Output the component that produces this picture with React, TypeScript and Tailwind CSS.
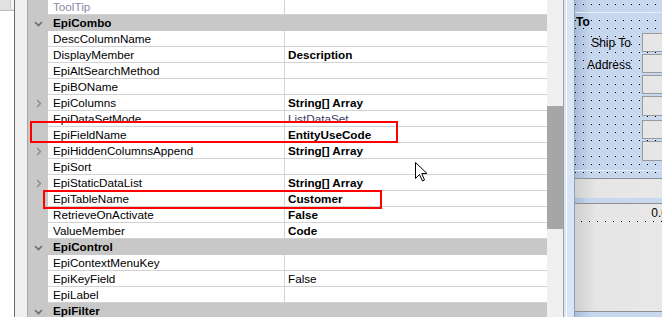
import React from "react"

type Row =
  | { kind: "cat"; name: string }
  | { kind: "prop"; name: string; value?: string; bold?: boolean; expand?: boolean; dim?: boolean; valueColor?: string }

const rows: Row[] = [
  { kind: "prop", name: "ToolTip", dim: true },
  { kind: "cat", name: "EpiCombo" },
  { kind: "prop", name: "DescColumnName" },
  { kind: "prop", name: "DisplayMember", value: "Description", bold: true },
  { kind: "prop", name: "EpiAltSearchMethod" },
  { kind: "prop", name: "EpiBOName" },
  { kind: "prop", name: "EpiColumns", value: "String[] Array", bold: true, expand: true },
  { kind: "prop", name: "EpiDataSetMode", value: "ListDataSet", valueColor: "text-[#3a3a5e]" },
  { kind: "prop", name: "EpiFieldName", value: "EntityUseCode", bold: true },
  { kind: "prop", name: "EpiHiddenColumnsAppend", value: "String[] Array", bold: true, expand: true },
  { kind: "prop", name: "EpiSort" },
  { kind: "prop", name: "EpiStaticDataList", value: "String[] Array", bold: true, expand: true },
  { kind: "prop", name: "EpiTableName", value: "Customer", bold: true },
  { kind: "prop", name: "RetrieveOnActivate", value: "False", bold: true },
  { kind: "prop", name: "ValueMember", value: "Code", bold: true },
  { kind: "cat", name: "EpiControl" },
  { kind: "prop", name: "EpiContextMenuKey" },
  { kind: "prop", name: "EpiKeyField", value: "False" },
  { kind: "prop", name: "EpiLabel" },
  { kind: "cat", name: "EpiFilter" },
]

function Chevron({ down }: { down?: boolean }) {
  return down ? (
    <svg width="9" height="6" viewBox="0 0 9 6" className="shrink-0">
      <polyline points="1,1 4.5,4.5 8,1" fill="none" stroke="#6b6b6b" strokeWidth="1.6" />
    </svg>
  ) : (
    <svg width="6" height="9" viewBox="0 0 6 9" className="shrink-0">
      <polyline points="1,1 4.5,4.5 1,8" fill="none" stroke="#8f8f8f" strokeWidth="1.5" />
    </svg>
  )
}

function PropertyGrid() {
  return (
    <div className="w-[519px] shrink-0 flex flex-col -mt-px bg-white">
      {rows.map((r, i) =>
        r.kind === "cat" ? (
          <div key={i} className="h-[16px] flex bg-[#c8c8c8]">
            <div className="w-[20px] flex items-center justify-center pl-[1px] pt-px">
              <Chevron down />
            </div>
            <span className="pl-[5px] font-bold text-black leading-[16px] whitespace-nowrap">{r.name}</span>
          </div>
        ) : (
          <div key={i} className="h-[16px] flex">
            <div className="w-[20px] bg-[#c8c8c8] flex items-center justify-center pl-[2px]">
              {r.expand && <Chevron />}
            </div>
            <div className={`w-[237px] border-b border-r border-[#d2d2d2] pl-[5px] leading-[16px] whitespace-nowrap ${r.dim ? "text-[#8a8aa6]" : "text-black"}`}>
              {r.name}
            </div>
            <div className={`flex-1 border-b border-[#d2d2d2] pl-[3px] leading-[16px] whitespace-nowrap ${r.bold ? "font-bold text-black" : r.valueColor ?? "text-black"}`}>
              {r.value}
            </div>
          </div>
        )
      )}
    </div>
  )
}

function Designer() {
  return (
    <div className="relative flex-1 h-full flex flex-col bg-gradient-to-r from-[#a9bcd8] via-[#c7d7ee] via-[18%] to-[#c8d8ef] text-[12px] text-black">
      <svg className="absolute inset-0 w-full h-full" aria-hidden>
        <defs>
          <pattern id="dots" x="0" y="4" width="8" height="8" patternUnits="userSpaceOnUse">
            <rect x="0" y="0" width="1" height="1" fill="#000" />
          </pattern>
        </defs>
        <rect x="0" y="0" width="100%" height="177" fill="url(#dots)" />
      </svg>

      <div className="h-[12px]" />
      <div className="relative h-px bg-[#e6edf8]" />
      <div className="relative h-[157px]">
        <span className="absolute left-[1px] top-[3px] font-bold">To</span>
        <span className="absolute right-[31px] top-[24px]">Ship To</span>
        <span className="absolute right-[31px] top-[46px]">Address</span>
        <div className="absolute left-[67px] top-[20px] flex flex-col gap-[2px]">
          {[19, 19, 19, 20, 19, 20].map((h, i) => (
            <div
              key={i}
              style={{ height: h }}
              className={`w-[30px] bg-[#e6e6e6] border border-[#9a9a9a] ${i === 4 ? "mt-[2px]" : ""}`}
            />
          ))}
        </div>
      </div>
      <div className="relative h-px bg-[#e6edf8]" />
      <div className="h-[7px]" />
      <div className="relative h-px bg-[#8e8e8e]" />
      <div className="relative h-[19px] bg-gradient-to-r from-[#cfcfcf] via-[#e6e6e6] via-[25%] to-[#e8e8e8]" />
      <div className="relative h-[5px]" />
      <div className="relative h-px bg-[#8e8e8e]" />
      <div className="relative h-[107px] flex flex-col bg-gradient-to-r from-[#cfcfcf] via-[#e6e6e6] via-[25%] to-[#e8e8e8]">
        <div className="h-[17px] flex items-center justify-end">
          <span className="pt-[1px] -mr-[6px] whitespace-nowrap">0.0</span>
        </div>
        <svg width="100%" height="1" className="block">
          <defs>
            <pattern id="hdots" x="6" y="0" width="8" height="1" patternUnits="userSpaceOnUse">
              <rect x="0" y="0" width="1" height="1" fill="#000" />
            </pattern>
          </defs>
          <rect x="0" y="0" width="100%" height="1" fill="url(#hdots)" />
        </svg>
      </div>
      <div className="relative h-px bg-[#8e8e8e]" />
    </div>
  )
}

export default function App() {
  return (
    <div className="relative w-[662px] h-[317px] overflow-hidden flex bg-white font-['Liberation_Sans',Arial,sans-serif] text-[11.7px] leading-none">
      {/* left toolbox edge */}
      <div className="w-[14px] shrink-0 flex flex-col">
        <div className="h-[11px] bg-[#e1e1e1] border-b border-[#bdbdbd] flex justify-end">
          <div className="w-[4px] h-[9px] bg-[#f6f6f6] border-l border-[#c9c9c9]" />
        </div>
        <div className="flex-1 bg-white" />
      </div>
      <div className="w-px shrink-0 bg-[#696969]" />
      <div className="w-[12px] shrink-0 bg-[#f0f0f0]" />
      <div className="w-px shrink-0 bg-[#a9a9a9]" />

      <PropertyGrid />

      {/* scrollbar */}
      <div className="w-[16px] shrink-0 bg-[#f0f0f0] flex flex-col">
        <div className="h-[106px]" />
        <div className="h-[123px] bg-[#a6a6a6]" />
      </div>
      <div className="w-px shrink-0 bg-[#a0a0a0]" />
      <div className="w-[10px] shrink-0 bg-[#dbe6f4] flex">
        <div className="w-[2px]" />
        <div className="w-px bg-white" />
      </div>
      <div className="w-px shrink-0 bg-[#8f9fb8]" />

      <Designer />

      {/* annotations */}
      <div className="absolute left-[30px] top-[121px] w-[368px] h-[22px] border-2 border-[#ff0000] pointer-events-none" />
      <div className="absolute left-[43px] top-[190px] w-[339px] h-[19px] border-2 border-[#ff0000] pointer-events-none" />

      {/* mouse cursor */}
      <svg className="absolute left-[415px] top-[162px]" width="13" height="20" viewBox="0 0 13 20">
        <path d="M0.5 0.5 L0.5 16.5 L4.5 12.5 L7.5 19 L9.5 18 L6.8 11.5 L12 11.5 Z" fill="#fff" stroke="#000" strokeWidth="1" />
      </svg>
    </div>
  )
}
